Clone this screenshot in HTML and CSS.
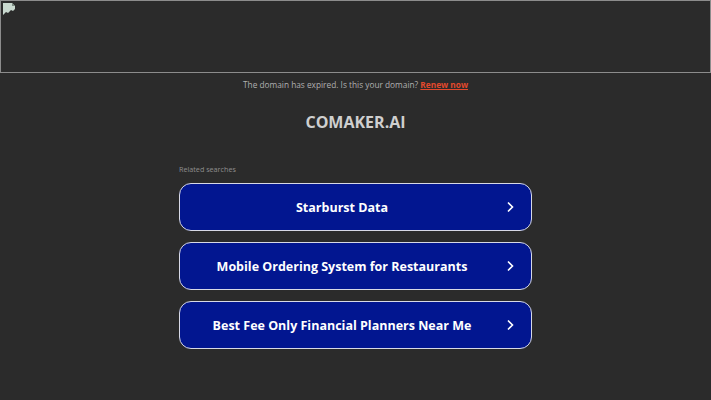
FILE: index.html
```html
<!DOCTYPE html>
<html>
<head>
<meta charset="utf-8">
<link rel="stylesheet" href="styles.css">
</head>
<body>
<div class="banner">
  <svg class="broken" width="14" height="14" viewBox="0 0 14 14"><path d="M1 1h9l3 3v3l-2 2-2-1-3 3-2-1-3 3z" fill="#c9d9cf"/><path d="M10 1v3h3" fill="#7a8a80"/></svg>
</div>
<p class="expired">The domain has expired. Is this your domain? <a href="#" class="renew">Renew now</a></p>
<h1 class="domain">COMAKER.AI</h1>
<div class="related">
  <div class="label">Related searches</div>
  <a href="#" class="item"><span>Starburst Data</span><svg class="chev" width="10" height="12" viewBox="0 0 10 12"><path d="M3 1.5l4.5 4.5-4.5 4.5" fill="none" stroke="#fff" stroke-width="1.6"/></svg></a>
  <a href="#" class="item"><span>Mobile Ordering System for Restaurants</span><svg class="chev" width="10" height="12" viewBox="0 0 10 12"><path d="M3 1.5l4.5 4.5-4.5 4.5" fill="none" stroke="#fff" stroke-width="1.6"/></svg></a>
  <a href="#" class="item"><span>Best Fee Only Financial Planners Near Me</span><svg class="chev" width="10" height="12" viewBox="0 0 10 12"><path d="M3 1.5l4.5 4.5-4.5 4.5" fill="none" stroke="#fff" stroke-width="1.6"/></svg></a>
</div>
</body>
</html>
```
FILE: styles.css
```css
html, body {
  margin: 0;
  padding: 0;
  background: #2b2b2b;
  font-family: "Open Sans", "Liberation Sans", sans-serif;
}
.banner {
  box-sizing: border-box;
  width: 711px;
  height: 73px;
  border: 1px solid #8c8c8c;
  position: relative;
}
.broken {
  position: absolute;
  left: 1px;
  top: 1px;
}
.expired {
  margin: 5px 0 0;
  text-align: center;
  font-size: 8.3px;
  line-height: 14px;
  color: #b0b0b0;
}
.renew {
  color: #e2492d;
  font-weight: 700;
  text-decoration: underline;
}
.domain {
  margin: 19px 0 0;
  text-align: center;
  font-size: 16px;
  line-height: 22px;
  font-weight: 700;
  color: #cfcfcf;
}
.related {
  width: 353px;
  margin: 30px auto 0;
  display: flex;
  flex-direction: column;
  gap: 11px;
}
.label {
  font-size: 7.2px;
  line-height: 12px;
  color: #8e8e8e;
  margin-bottom: -3px;
}
.item {
  box-sizing: border-box;
  height: 48px;
  border: 1px solid #d7d9e6;
  border-radius: 12px;
  background: #021690;
  color: #ffffff;
  text-decoration: none;
  font-weight: 700;
  font-size: 12.5px;
  display: flex;
  align-items: center;
  position: relative;
  justify-content: center;
}
.item span {
  padding-right: 27px;
}
.chev {
  position: absolute;
  right: 16px;
  top: 17px;
}
```
